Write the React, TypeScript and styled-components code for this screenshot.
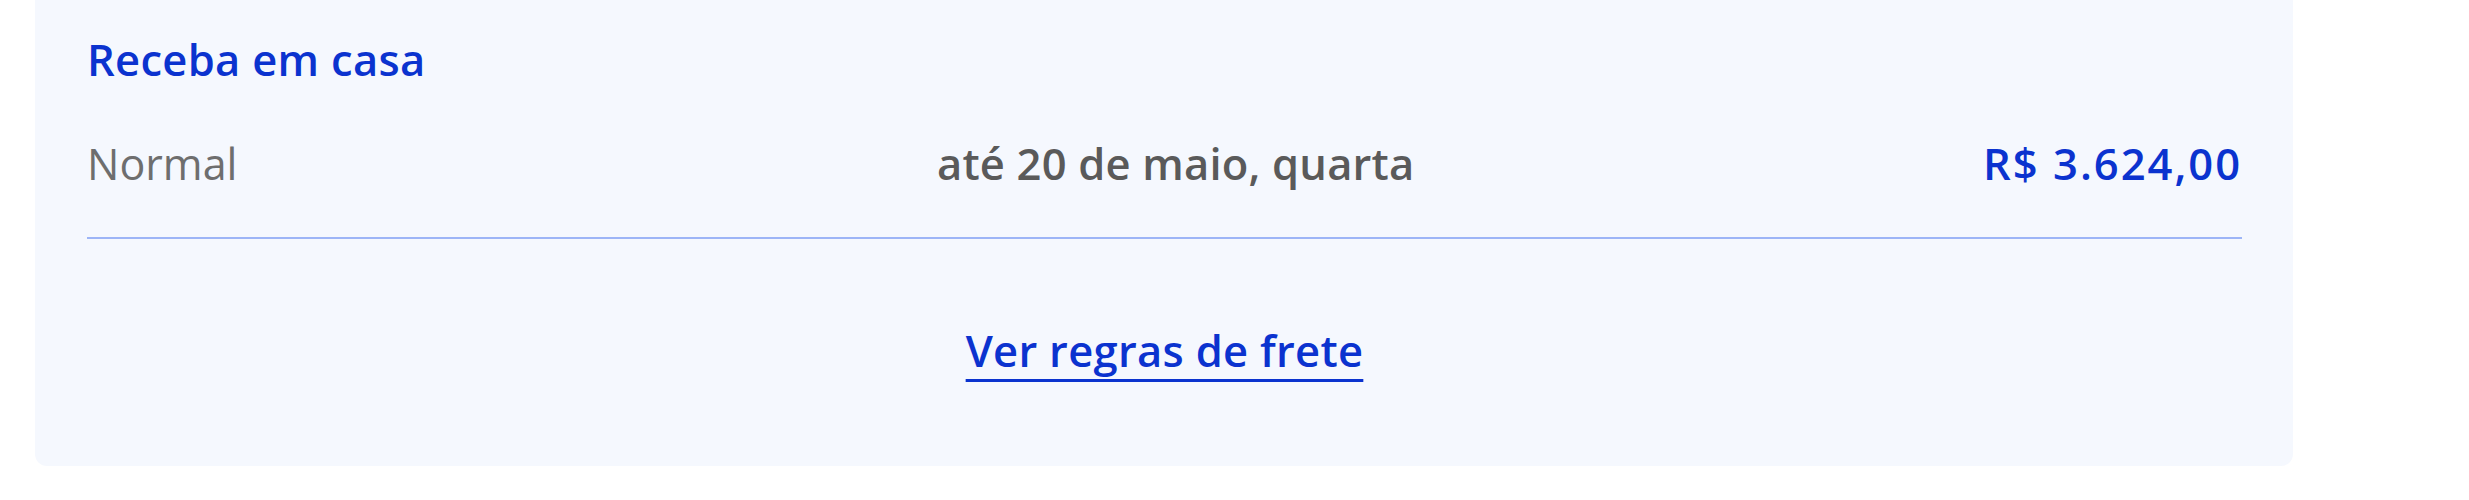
import React from "react";
import styled, { createGlobalStyle } from "styled-components";

const GlobalStyle = createGlobalStyle`
  html, body {
    margin: 0;
    padding: 0;
    background: #ffffff;
  }
  body {
    font-family: "Open Sans", "Noto Sans", sans-serif;
  }
`;

const Page = styled.div`
  padding: 0 0 0 35px;
`;

const Panel = styled.section`
  width: 2258px;
  box-sizing: border-box;
  background: #f5f8fe;
  border-radius: 0 0 12px 12px;
  padding: 30px 51px 85px 52px;
  display: flex;
  flex-direction: column;
`;

const Title = styled.h2`
  margin: 0;
  font-size: 43.5px;
  line-height: 60px;
  font-weight: 600;
  color: #0b33cf;
  letter-spacing: 0.3px;
`;

const Row = styled.div`
  margin-top: 44px;
  padding-bottom: 43px;
  border-bottom: 2px solid #9db5f7;
  display: grid;
  grid-template-columns: 850px 1fr auto;
  align-items: baseline;
  font-size: 44px;
  line-height: 60px;
`;

const Cell = styled.span<{ $tone: "muted" | "strong" | "price" }>`
  font-size: ${(p) => (p.$tone === "muted" ? "43px" : "43.5px")};
  font-weight: ${(p) => (p.$tone === "muted" ? 400 : 600)};
  color: ${(p) =>
    p.$tone === "muted" ? "#6e6e6e" : p.$tone === "strong" ? "#5a5a5a" : "#0b33cf"};
  text-align: ${(p) => (p.$tone === "price" ? "right" : "left")};
  letter-spacing: ${(p) => (p.$tone === "price" ? "2px" : p.$tone === "strong" ? "0.2px" : "0")};
`;

const LinkRow = styled.div`
  margin-top: 82px;
  display: flex;
  justify-content: center;
`;

const RulesLink = styled.a`
  font-size: 43.5px;
  line-height: 60px;
  font-weight: 600;
  color: #0b33cf;
  letter-spacing: 0.3px;
  text-decoration: underline;
  text-decoration-thickness: 3px;
  text-underline-offset: 12px;
  cursor: pointer;
`;

export default function App() {
  return (
    <>
      <GlobalStyle />
      <Page>
        <Panel>
          <Title>Receba em casa</Title>
          <Row>
            <Cell $tone="muted">Normal</Cell>
            <Cell $tone="strong">até 20 de maio, quarta</Cell>
            <Cell $tone="price">R$ 3.624,00</Cell>
          </Row>
          <LinkRow>
            <RulesLink>Ver regras de frete</RulesLink>
          </LinkRow>
        </Panel>
      </Page>
    </>
  );
}
